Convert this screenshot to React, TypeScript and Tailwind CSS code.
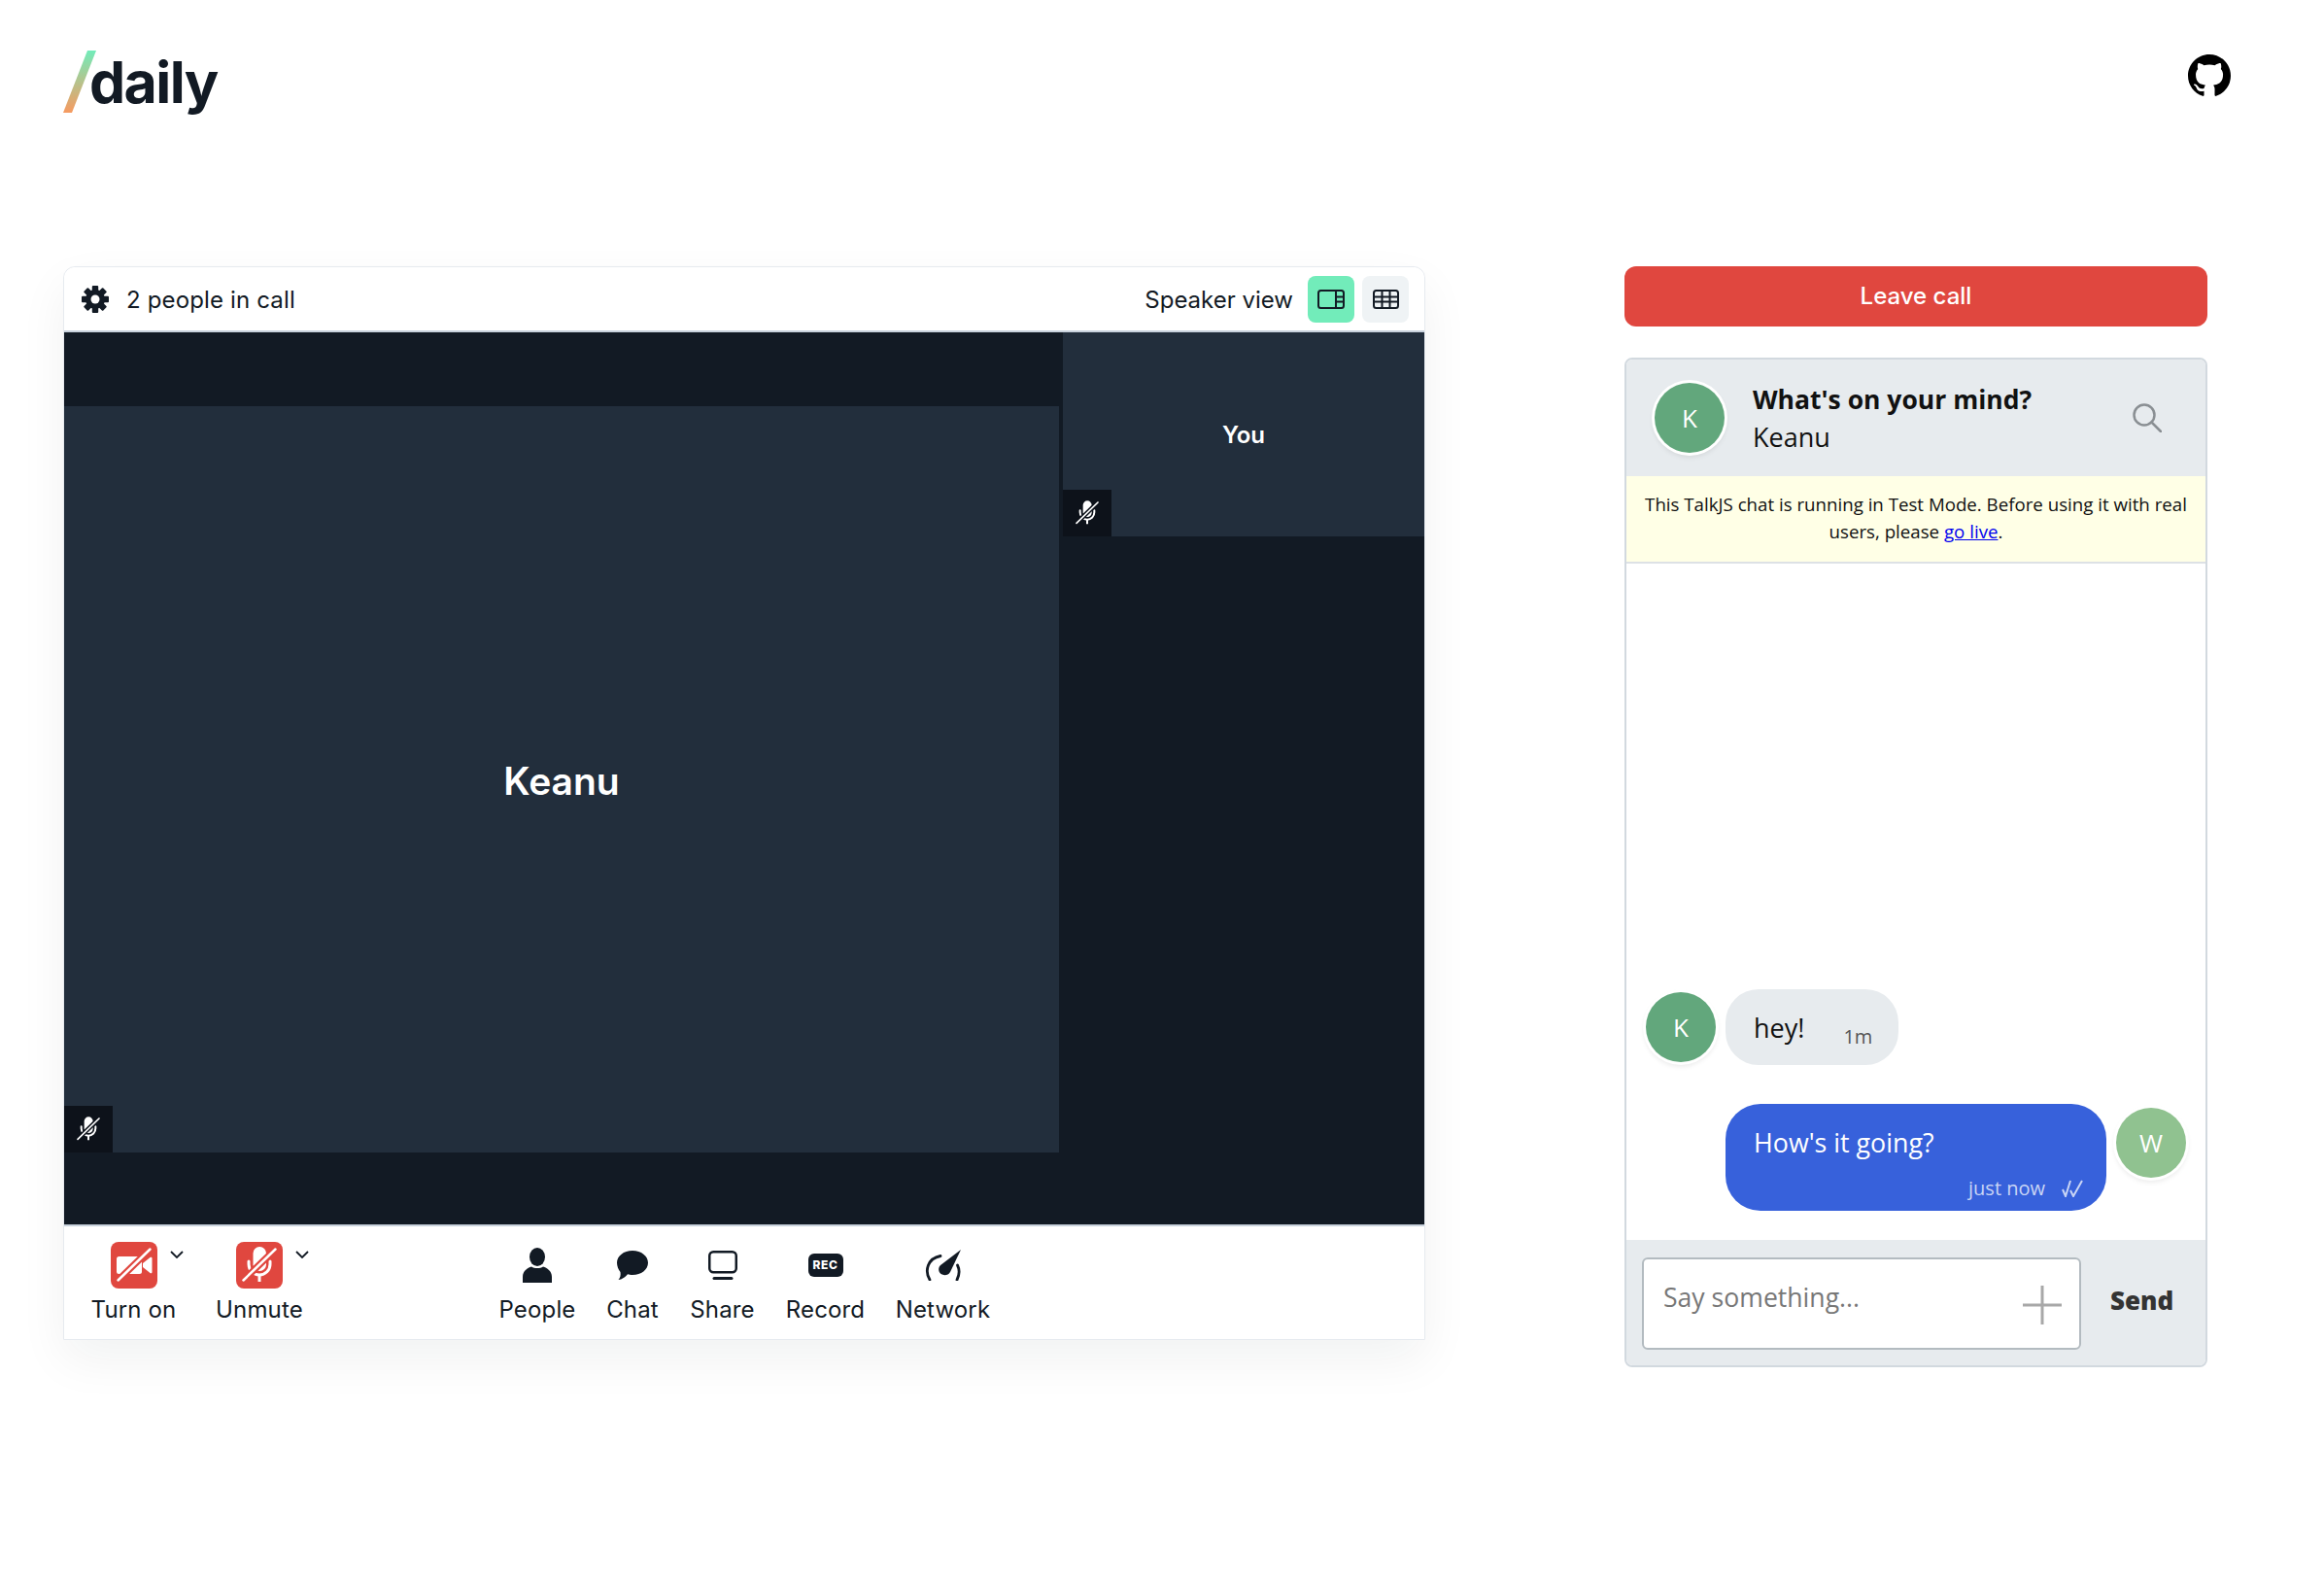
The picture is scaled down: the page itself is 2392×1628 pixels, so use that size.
function MicOff({ className = '', halo }: { className?: string; halo: string }) {
  return (
    <svg viewBox="0 0 48 48" className={className}>
      <rect x="17.5" y="5" width="13.5" height="25" rx="6.7" fill="#fff" />
      <path d="M13 20v3a11 11 0 0 0 22 0v-3" fill="none" stroke="#fff" strokeWidth="3" strokeLinecap="round" />
      <path d="M24 33v8" stroke="#fff" strokeWidth="3" />
      <path d="M41 7 7 40" stroke={halo} strokeWidth="7" />
      <path d="M40.500 7.500 7.500 39.500" stroke="#fff" strokeWidth="2.500" strokeLinecap="round" />
    </svg>
  );
}

function CameraOff() {
  return (
    <svg viewBox="0 0 48 48" className="w-12 h-12">
      <rect x="6" y="15" width="26" height="18" rx="2.500" fill="#fff" />
      <path d="M33 22l7.500-6c1-.7 2 0 2 1v14c0 1-1 1.700-2 1l-7.500-6z" fill="#fff" />
      <path d="M41 7 7 40" stroke="#e0473f" strokeWidth="7" />
      <path d="M40.500 7.500 7.500 39.500" stroke="#fff" strokeWidth="2.500" strokeLinecap="round" />
    </svg>
  );
}

function Gear() {
  const angles = [0, 45, 90, 135, 180, 225, 270, 315];
  return (
    <svg viewBox="0 0 28 28" className="w-7 h-7" fill="#121a24">
      <circle cx="14" cy="14" r="10" />
      {angles.map((a) => (
        <rect key={a} x="10.800" y="0" width="6.400" height="7" rx="1" transform={`rotate(${a} 14 14)`} />
      ))}
      <circle cx="14" cy="14" r="4.500" fill="#fff" />
    </svg>
  );
}

function Chevron() {
  return (
    <svg viewBox="0 0 14 8" className="absolute w-[14px] h-2 top-[9px] -right-[27px]">
      <path d="M1 1l6 6 6-6" fill="none" stroke="#121a24" strokeWidth="1.800" />
    </svg>
  );
}

function TrayItem({ label, width, children }: { label: string; width: string; children: React.ReactNode }) {
  return (
    <div className={`flex flex-col items-center ${width}`}>
      <div className="relative h-12 flex items-center justify-center">{children}</div>
      <span className="mt-2 text-2xl leading-7 tracking-[0.15px] whitespace-nowrap text-[#121a24]">{label}</span>
    </div>
  );
}

function Avatar({ letter, color }: { letter: string; color: string }) {
  return (
    <div
      className={`w-[72px] h-[72px] shrink-0 rounded-full flex items-center justify-center text-white text-[26px] shadow-[0_0_0_3px_#fff,0_3px_5px_2px_rgba(0,0,0,0.08)] ${color}`}
    >
      {letter}
    </div>
  );
}

export default function App() {
  return (
    <div className="min-h-[1628px] bg-white font-['Inter',sans-serif] text-[#121a24]">
      <header className="h-[274px] flex items-start justify-between pl-[65px] pr-[96px]">
        <div className="flex mt-[52px]">
          <svg viewBox="0 0 34 64" className="w-[34px] h-16">
            <defs>
              <linearGradient id="slash" x1="0" y1="0" x2="0" y2="1">
                <stop offset="0" stopColor="#72ecba" />
                <stop offset="1" stopColor="#f79a60" />
              </linearGradient>
            </defs>
            <polygon points="25,0 34,0 9,64 0,64" fill="url(#slash)" />
          </svg>
          <span className="-ml-[7px] mt-[2px] text-[59px] leading-[62px] font-bold tracking-[-1.6px]">daily</span>
        </div>
        <svg viewBox="0 0 16 16" className="w-11 h-11 mt-[56px]" fill="#000">
          <path d="M8 0C3.58 0 0 3.58 0 8c0 3.54 2.29 6.53 5.47 7.59.4.07.55-.17.55-.38 0-.19-.01-.82-.01-1.49-2.01.37-2.53-.49-2.69-.94-.09-.23-.48-.94-.82-1.13-.28-.15-.68-.52-.01-.53.63-.01 1.08.58 1.23.82.72 1.21 1.87.87 2.33.66.07-.52.28-.87.51-1.07-1.78-.2-3.64-.89-3.64-3.95 0-.87.31-1.59.82-2.15-.08-.2-.36-1.02.08-2.12 0 0 .67-.21 2.2.82.64-.18 1.32-.27 2-.27.68 0 1.36.09 2 .27 1.53-1.04 2.2-.82 2.2-.82.44 1.1.16 1.92.08 2.12.51.56.82 1.27.82 2.15 0 3.07-1.87 3.75-3.65 3.95.29.25.54.73.54 1.48 0 1.07-.01 1.93-.01 2.2 0 .21.15.46.55.38A8.013 8.013 0 0016 8c0-4.42-3.58-8-8-8z" />
        </svg>
      </header>

      <main className="flex items-start pl-[65px]">
        {/* call frame */}
        <section className="w-[1402px] h-[1105px] flex flex-col border border-[#e6eaef] rounded-t-xl shadow-[0_20px_50px_rgba(18,26,36,0.06)]">
          <div className="h-[67px] shrink-0 flex items-center pl-[18px] pr-4 border-b-2 border-[#c8d1dc] bg-white rounded-t-xl">
            <Gear />
            <span className="ml-[18px] mt-[2px] text-2xl tracking-[0.15px]">2 people in call</span>
            <span className="ml-auto mt-[2px] text-2xl">Speaker view</span>
            <button className="ml-[15px] w-12 h-12 rounded-lg bg-[#72ecba] flex items-center justify-center">
              <svg viewBox="0 0 28 20" className="w-7 h-5" fill="none" stroke="#121a24" strokeWidth="2">
                <rect x="1" y="1" width="26" height="18" rx="2.500" />
                <path d="M19 1v18M19 7.500h8M19 12.500h8" />
              </svg>
            </button>
            <button className="ml-2 w-12 h-12 rounded-lg bg-[#eff3f5] flex items-center justify-center">
              <svg viewBox="0 0 27 20" className="w-[27px] h-5" fill="none" stroke="#121a24" strokeWidth="2">
                <rect x="1" y="1" width="25" height="18" rx="2.500" />
                <path d="M1 7.500h25M1 12.500h25M9.500 1v18M17.500 1v18" />
              </svg>
            </button>
          </div>

          <div className="h-[918px] shrink-0 flex bg-[#121a24]">
            <div className="w-[1024px] flex items-center">
              <div className="relative mt-[2px] w-full h-[768px] bg-[#222e3c] flex items-center justify-center">
                <span className="mt-1 text-[39px] font-semibold text-white">Keanu</span>
                <div className="absolute left-0 bottom-0 w-[50px] h-12 bg-[#0d121a] flex items-center justify-center">
                  <MicOff className="w-8 h-8" halo="#0d121a" />
                </div>
              </div>
            </div>
            <div className="relative ml-1 flex-1 h-[210px] bg-[#222e3c] flex items-center justify-center">
              <span className="mt-[2px] text-2xl font-semibold text-white">You</span>
              <div className="absolute left-0 bottom-0 w-[50px] h-12 bg-[#0d121a] flex items-center justify-center">
                <MicOff className="w-8 h-8" halo="#0d121a" />
              </div>
            </div>
          </div>

          <div className="flex-1 flex pt-4 pl-[29px] border-t-2 border-[#c8d1dc] bg-white">
            <TrayItem label="Turn on" width="w-[85px]">
              <div className="w-12 h-12 rounded-lg bg-[#e0473f]">
                <CameraOff />
              </div>
              <Chevron />
            </TrayItem>
            <div className="ml-[42px]">
              <TrayItem label="Unmute" width="w-[90px]">
                <div className="w-12 h-12 rounded-lg bg-[#e0473f]">
                  <MicOff className="w-12 h-12" halo="#e0473f" />
                </div>
                <Chevron />
              </TrayItem>
            </div>
            <div className="ml-[202px] flex gap-8">
              <TrayItem label="People" width="w-[78px]">
                <svg viewBox="0 0 30 36" className="w-[30px] h-9" fill="#121a24">
                  <ellipse cx="15" cy="9.500" rx="8" ry="9.500" />
                  <path d="M0 36v-6c0-6 5-9.500 9-10.500 3 2 9 2 12 0 4 1 9 4.500 9 10.500v6z" />
                </svg>
              </TrayItem>
              <TrayItem label="Chat" width="w-[54px]">
                <svg viewBox="0 0 32 30" className="w-8 h-[30px]" fill="#121a24">
                  <path d="M16 0c9 0 16 5.500 16 12.500S25 25 16 25c-2 0-3.500-.2-5-.7C9 27 5 30 1.500 30c2-2 2.500-5 2-8C1.500 19.500 0 16 0 12.500 0 5.500 7 0 16 0z" />
                </svg>
              </TrayItem>
              <TrayItem label="Share" width="w-[67px]">
                <svg viewBox="0 0 30 30" className="w-[30px] h-[30px]" fill="none" stroke="#121a24" strokeWidth="2.500">
                  <rect x="1.250" y="1.250" width="27.500" height="21" rx="4" />
                  <path d="M6 28.500h18" strokeWidth="3" strokeLinecap="round" />
                </svg>
              </TrayItem>
              <TrayItem label="Record" width="w-[81px]">
                <div className="w-9 h-6 rounded-md bg-[#121a24] flex items-center justify-center text-[12px] leading-none font-extrabold tracking-[0.6px] text-white">
                  REC
                </div>
              </TrayItem>
              <TrayItem label="Network" width="w-[97px]">
                <svg viewBox="0 0 37 32" className="w-[37px] h-8" fill="none">
                  <path d="M5 31C-.5 22 2.500 9 16 6.500" stroke="#121a24" strokeWidth="2.800" strokeLinecap="round" />
                  <path d="M33 31c2.500-5 3-10 .5-15" stroke="#121a24" strokeWidth="2.800" strokeLinecap="round" />
                  <path d="M37 0 26 23c-2 3.500-6.500 4-9.500 2-3-2.500-3-6.500-.5-9z" fill="#121a24" />
                </svg>
              </TrayItem>
            </div>
          </div>
        </section>

        {/* chat column */}
        <aside className="ml-[205px] w-[600px] font-['Open_Sans',sans-serif]">
          <button className="w-full h-[62px] rounded-xl bg-[#e0473f] text-white text-2xl font-medium font-['Inter',sans-serif]">
            Leave call
          </button>

          <div className="mt-8 h-[1039px] flex flex-col border-2 border-[#d2d9df] rounded-lg overflow-hidden">
            <div className="h-[120px] shrink-0 flex items-center pl-[29px] pr-[45px] bg-[#e7ebee]">
              <Avatar letter="K" color="bg-[#62a77c]" />
              <div className="ml-[29px] text-[#111]">
                <div className="text-[26.5px] leading-[39px] font-bold">What's on your mind?</div>
                <div className="text-[27px] leading-[38px]">Keanu</div>
              </div>
              <svg viewBox="0 0 30 30" className="ml-auto w-[30px] h-[30px]" fill="none" stroke="#8a8f93" strokeWidth="2.500">
                <circle cx="12" cy="12" r="10.500" />
                <path d="M19.500 19.500 29 29" strokeLinecap="round" />
              </svg>
            </div>

            <div className="h-[90px] shrink-0 flex items-center justify-center pb-[2px] px-4 text-center text-[18.7px] leading-7 text-[#111] bg-[#ffffe6] border-b-2 border-[#dde1e5]">
              <p>
                This TalkJS chat is running in Test Mode. Before using it with real
                <br />
                users, please <a className="text-[#0000ee] underline">go live</a>.
              </p>
            </div>

            <div className="flex-1 flex flex-col justify-end gap-10 pb-[30px]">
              <div className="flex items-center gap-[10px] pl-[20px]">
                <Avatar letter="K" color="bg-[#62a77c]" />
                <div className="w-[178px] h-[78px] rounded-[34px] bg-[#e7ebee] flex items-center pl-[29px]">
                  <span className="mt-[2px] text-[27px] text-[#111]">hey!</span>
                  <span className="ml-[40px] mt-5 text-[20px] text-[#555]">1m</span>
                </div>
              </div>
              <div className="flex items-start justify-end gap-[10px] pr-[20px]">
                <div className="w-[392px] h-[110px] rounded-[36px] bg-[#3761db] flex flex-col pl-[29px] pr-6 pt-5 text-white">
                  <span className="text-[26.8px] leading-[40px]">How's it going?</span>
                  <div className="mt-[13px] flex items-center justify-end text-[20px] leading-7 text-[#c9d5f5]">
                    <span>just now</span>
                    <svg viewBox="0 0 22 18" className="ml-[17px] w-[22px] h-[18px]" fill="none" stroke="#c9d5f5" strokeWidth="2">
                      <path d="M1 10l3 7 5-16M9 11l3 6 9-16" />
                    </svg>
                  </div>
                </div>
                <div className="mt-1">
                  <Avatar letter="W" color="bg-[#90c290]" />
                </div>
              </div>
            </div>

            <div className="flex-1 max-h-[129px] flex items-start pt-[18px] pl-4 bg-[#e7ebee]">
              <div className="w-[452px] h-[95px] flex items-start justify-between pl-5 pr-[18px] pt-[21px] bg-white border-2 border-[#b3bbc0] rounded-md">
                <span className="text-[26.6px] leading-9 text-[#777]">Say something...</span>
                <svg viewBox="0 0 40 40" className="w-10 h-10 mt-[6px]" stroke="#a8a8a8" strokeWidth="3">
                  <path d="M20 0v40M0 20h40" />
                </svg>
              </div>
              <span className="ml-[30px] mt-[26px] text-[26px] leading-9 font-extrabold text-[#333]">Send</span>
            </div>
          </div>
        </aside>
      </main>
    </div>
  );
}
